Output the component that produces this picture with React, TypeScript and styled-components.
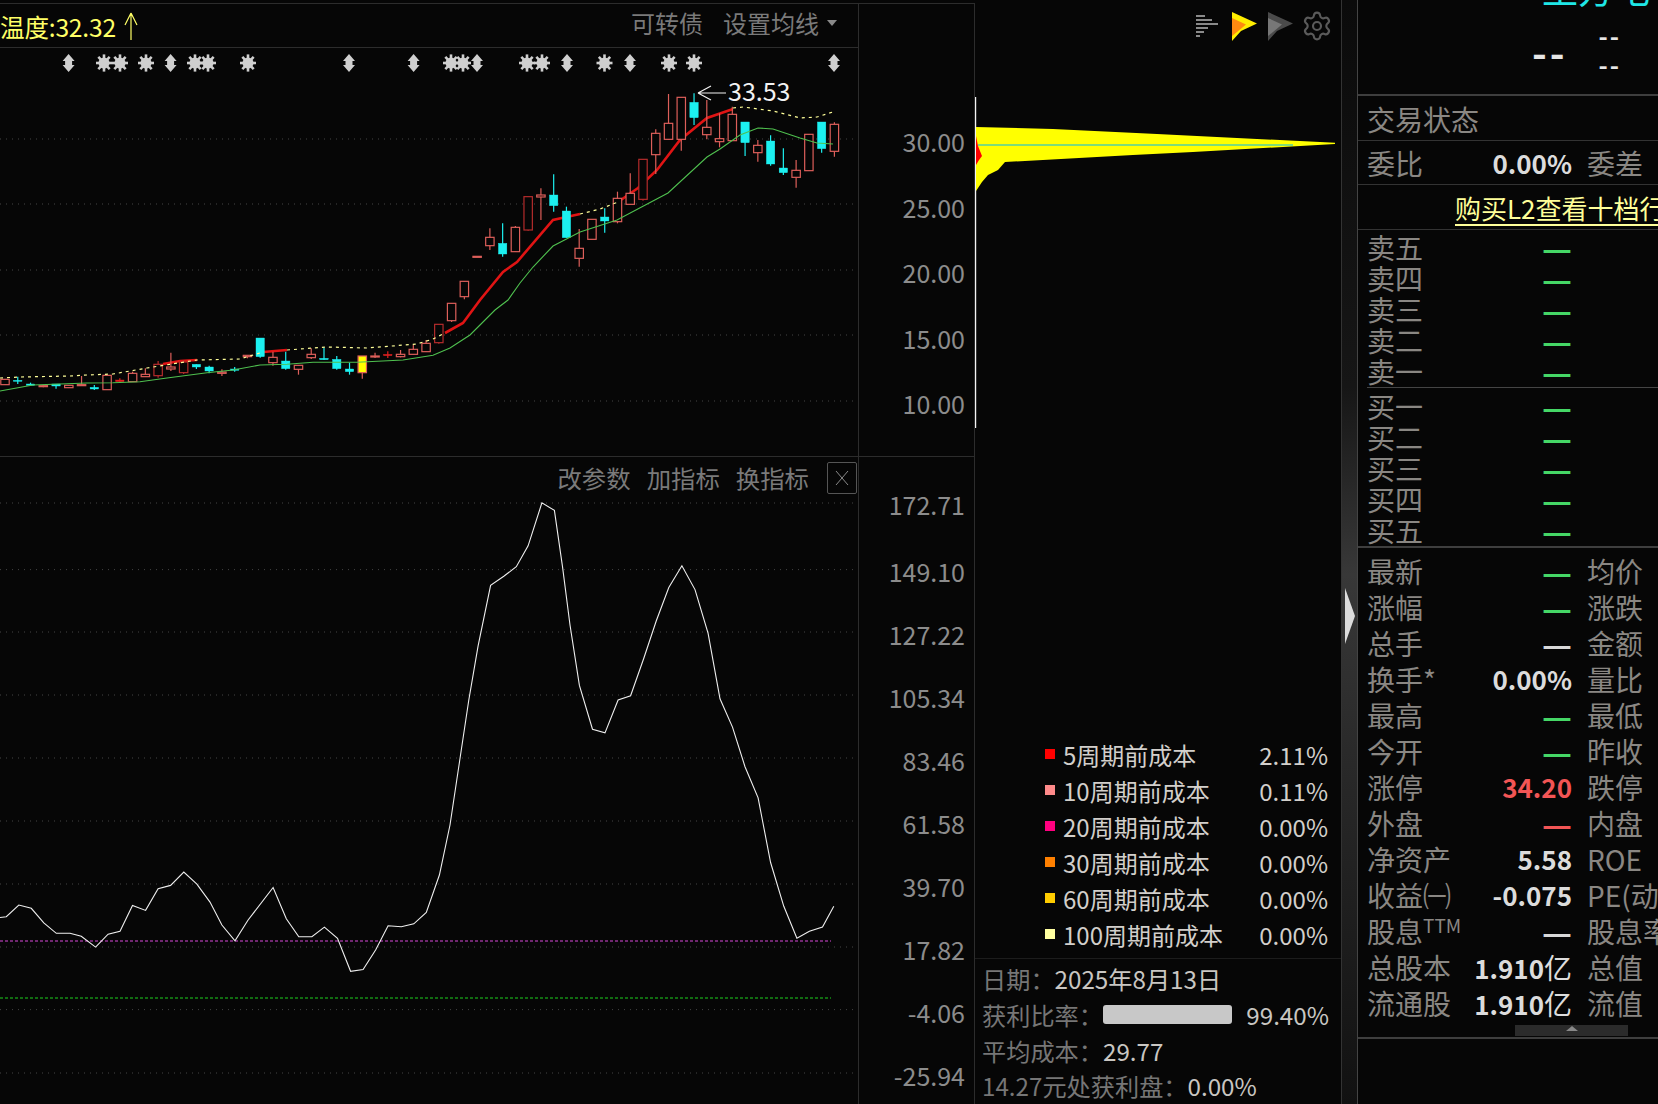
import React from 'react';
import styled, { createGlobalStyle } from 'styled-components';
import { Settings } from 'lucide-react';

const FONT = '"Noto Sans CJK SC", "Noto Sans", sans-serif';
const BG = '#060606';
const LINE = '#2c2c2c';

const GlobalStyle = createGlobalStyle`
  html, body {
    margin: 0;
    background: ${BG};
    font-family: ${FONT};
    overflow: hidden;
  }
  * { box-sizing: border-box; }
`;

const Page = styled.div`
  display: flex;
  width: 1658px;
  height: 1104px;
  overflow: hidden;
  background: ${BG};
`;

const ChartsColumn = styled.div`
  width: 975px;
  flex: none;
  display: flex;
  flex-direction: column;
  padding-top: 3px;
`;

const Pane = styled.div<{ $height: number; $top?: boolean }>`
  display: flex;
  height: ${p => p.$height}px;
  border-top: 1px solid ${LINE};
  ${p => (p.$top ? '' : 'flex: 1;')}
`;

const Plot = styled.div`
  width: 859px;
  flex: none;
  border-right: 1px solid ${LINE};
  position: relative;
  display: flex;
  flex-direction: column;
`;

const Axis = styled.div<{ $pad: number; $row: number }>`
  width: 116px;
  flex: none;
  padding: ${p => p.$pad}px 9px 0 0;
  border-right: 1px solid ${LINE};
  text-align: right;
  font-size: 25px;
  line-height: ${p => p.$row}px;
  color: #8c8c8c;
`;

const IndicatorAxis = styled(Axis)`
  & > div:first-child {
    margin-bottom: 4px;
  }
`;

const ChartHeader = styled.div`
  height: 44px;
  flex: none;
  display: flex;
  align-items: center;
  border-bottom: 1px solid ${LINE};
  color: #7a7a7a;
  font-size: 24px;
`;

const Temperature = styled.span`
  color: #ffff66;
  font-size: 24.6px;
  letter-spacing: -0.2px;
`;

const UpArrow = styled.svg`
  width: 16px;
  height: 28px;
  margin-left: 7px;
  margin-right: auto;
`;

const HeaderLink = styled.span`
  margin: -6px 20px 0 0;
`;

const Caret = styled.span`
  width: 0;
  height: 0;
  margin: -5px 21px 0 -12px;
  border-left: 5px solid transparent;
  border-right: 5px solid transparent;
  border-top: 6px solid #8a8a8a;
`;

const PeakLabel = styled.div`
  position: absolute;
  left: 728px;
  top: 68px;
  color: #f2f2f2;
  font-size: 25px;
  line-height: 36px;
`;

const PlotSvg = styled.svg`
  display: block;
  flex: none;
`;

const IndicatorBar = styled.div`
  height: 45px;
  flex: none;
  display: flex;
  justify-content: flex-end;
  align-items: center;
  padding: 0 1px 4px 0;
  color: #7a7a7a;
  font-size: 24.4px;
`;

const IndicatorLink = styled.span`
  margin-right: 16px;
`;

const CloseBox = styled.div`
  width: 30px;
  height: 32px;
  margin-left: 2px;
  display: flex;
  align-items: center;
  justify-content: center;
  border: 1px solid #555;
  border-radius: 2px;
`;

const ChipPanel = styled.div`
  width: 367px;
  flex: none;
  display: flex;
  flex-direction: column;
  border-right: 1px solid #333;
`;

const ChipTools = styled.div`
  height: 48px;
  flex: none;
  display: flex;
  align-items: center;
  justify-content: flex-end;
  padding: 3px 8px 0 0;
  gap: 10px;
`;

const DartSvg = styled.svg`
  margin: 3px -2px 0 2px;
`;

const Legend = styled.div`
  margin-top: auto;
  padding: 0 13px 6px 0;
  border-bottom: 1px solid #1c1c1c;
`;

const LegendRow = styled.div`
  height: 36px;
  display: flex;
  align-items: center;
  padding-left: 70px;
  font-size: 24px;
  color: #d2cfcb;
`;

const Swatch = styled.i<{ $color: string }>`
  width: 10px;
  height: 10px;
  margin-right: 8px;
  margin-top: -1px;
  background: ${p => p.$color};
`;

const LegendValue = styled.span`
  margin-left: auto;
`;

const ChipInfo = styled.div`
  height: 145px;
  flex: none;
  padding: 2px 12px 0 7px;
  font-size: 24.2px;
  color: #c9c6c2;
`;

const InfoRow = styled.div`
  height: 35.7px;
  display: flex;
  align-items: center;
  white-space: nowrap;
`;

const InfoLabel = styled.span`
  color: #767676;
`;

const ProfitBar = styled.div`
  width: 131px;
  height: 19px;
  margin: 0 14px 0 0;
  background: #c8c8c8;
  border-radius: 3px;
`;

const Gutter = styled.div`
  width: 15px;
  flex: none;
  padding: 588px 0 0 3px;
  background: linear-gradient(180deg, #0b0b0b 0%, #161616 35%, #383838 52%, #2a2a2a 68%, #111 100%);
`;

const Handle = styled.div`
  width: 0;
  height: 0;
  border-top: 28px solid transparent;
  border-bottom: 28px solid transparent;
  border-left: 10px solid #dcdcdc;
`;

const QuotePanel = styled.div`
  flex: 1;
  min-width: 0;
  overflow: hidden;
  border-left: 1px solid #444;
  color: #8a8783;
  font-size: 28px;
`;

const QuoteHead = styled.div`
  height: 96px;
  overflow: hidden;
  border-bottom: 2px solid #3e3e3e;
`;

const StockName = styled.div`
  margin: -31px 0 0 184px;
  height: 38px;
  font-size: 36px;
  line-height: 38px;
  color: #1fe6e6;
  white-space: nowrap;
`;

const HeadNumbers = styled.div`
  display: flex;
  align-items: center;
  margin-top: 16px;
  padding-left: 174px;
  color: #e6e6e6;
  font-weight: 700;
`;

const BigDash = styled.span`
  font-size: 40px;
  line-height: 44px;
  letter-spacing: 3px;
`;

const SmallDashes = styled.div`
  margin-left: 31px;
  margin-top: -2px;
  display: flex;
  flex-direction: column;
  font-size: 25px;
  line-height: 29px;
  letter-spacing: 2px;
`;

const StatusRow = styled.div`
  height: 45px;
  display: flex;
  align-items: center;
  padding: 2px 0 0 9px;
  border-bottom: 1px solid #333;
`;

const RatioRow = styled.div`
  height: 44px;
  display: grid;
  grid-template-columns: 85px 105px 200px;
  column-gap: 15px;
  align-items: center;
  padding-left: 9px;
  border-bottom: 1px solid #333;
  white-space: nowrap;
`;

const PromoRow = styled.div`
  height: 45px;
  padding-left: 97px;
  border-bottom: 1px solid #333;
  white-space: nowrap;
  line-height: 45px;
  font-size: 26px;
`;

const PromoLink = styled.span`
  color: #ffff99;
  border-bottom: 2px solid #ffff99;
  line-height: 32px;
  display: inline-block;
`;

const Book = styled.div<{ $divider?: boolean }>`
  margin-left: 9px;
  padding-top: ${p => (p.$divider ? 2 : 2.5)}px;
  ${p => (p.$divider ? 'border-bottom: 1px solid #444;' : '')}
`;

const BookRow = styled.div`
  height: 31px;
  display: grid;
  grid-template-columns: 100px 105px;
  line-height: 31px;
`;

const Stats = styled.div`
  border-top: 2px solid #3e3e3e;
  border-bottom: 2px solid #3e3e3e;
  height: 493px;
  padding-top: 5px;
`;

const StatRow = styled.div`
  height: 36px;
  display: grid;
  grid-template-columns: 85px 105px 200px;
  column-gap: 15px;
  padding-left: 9px;
  line-height: 36px;
  white-space: nowrap;
`;

const Value = styled.span<{ $color?: string; $bold?: boolean }>`
  text-align: right;
  font-size: 26px;
  font-weight: ${p => (p.$bold ? 700 : 400)};
  color: ${p => p.$color || '#dcdcdc'};
`;

const Dash = styled.span<{ $color: string }>`
  justify-self: end;
  font-size: 33px;
  line-height: inherit;
  font-weight: 700;
  color: ${p => p.$color};
`;

const Thin = styled.span`
  font-weight: 400;
  font-size: 28px;
`;

const Sup = styled.sup`
  font-size: 19px;
  line-height: 0;
`;

const ScrollTab = styled.div`
  width: 113px;
  height: 11px;
  margin: 4px 0 0 157px;
  display: flex;
  justify-content: center;
  background: #2b2b2b;
`;

const TabArrow = styled.div`
  width: 0;
  height: 0;
  margin-top: 1px;
  border-left: 6px solid transparent;
  border-right: 6px solid transparent;
  border-bottom: 5px solid #888;
`;

// candle x positions in page pixels
const candleX = (i: number) => 5 + 12.76 * i;

type Kind = 'u' | 'd' | 'c' | 'y' | 'f';
// body top, body bottom, wick top, wick bottom, kind; values are 3x-crop pixels
type Raw = [number, number, number, number, Kind];

const lowCandles: Raw[] = [
  [238, 254, 238, 254, 'u'], [241, 243, 230, 252, 'c'], [252, 256, 248, 258, 'c'], [257, 260, 254, 262, 'u'],
  [252, 258, 252, 266, 'c'], [256, 263, 256, 263, 'u'], [254, 257, 228, 258, 'u'], [262, 267, 255, 270, 'c'],
  [226, 269, 226, 269, 'u'], [240, 245, 235, 245, 'f'], [220, 245, 215, 245, 'u'], [223, 230, 205, 230, 'u'],
  [193, 227, 183, 233, 'd'], [201, 207, 158, 213, 'u'], [186, 218, 180, 222, 'd'], [193, 201, 193, 207, 'c'],
  [201, 213, 197, 220, 'c'], [216, 220, 208, 228, 'u'], [207, 211, 201, 215, 'c'], [166, 170, 166, 175, 'u'],
  [114, 170, 114, 173, 'c'], [172, 188, 155, 197, 'u'], [183, 206, 155, 209, 'c'], [196, 208, 196, 224, 'u'],
  [163, 173, 145, 177, 'u'], [175, 179, 143, 179, 'c'], [178, 206, 168, 209, 'c'], [207, 215, 188, 224, 'c'],
  [168, 218, 168, 236, 'y'], [168, 171, 158, 174, 'u'], [163, 167, 154, 174, 'f'], [163, 170, 150, 172, 'u'],
  [148, 163, 135, 163, 'u'], [130, 155, 120, 155, 'u'], [73, 128, 73, 131, 'd'], [10, 62, 10, 66, 'u'],
];

const highCandles: Raw[] = [
  [604, 650, 604, 658, 'u'], [529, 531, 529, 531, 'u'], [472, 497, 445, 510, 'u'], [490, 522, 430, 530, 'c'],
  [442, 515, 438, 515, 'u'], [350, 450, 350, 452, 'd'], [345, 351, 325, 420, 'u'], [345, 377, 283, 395, 'c'],
  [393, 473, 380, 473, 'c'], [505, 535, 447, 560, 'u'], [418, 478, 418, 478, 'u'], [411, 423, 385, 458, 'c'],
  [355, 425, 335, 430, 'u'], [340, 373, 280, 373, 'u'], [238, 358, 238, 362, 'd'], [160, 224, 148, 282, 'u'],
  [130, 178, 42, 178, 'u'], [52, 178, 52, 212, 'u'], [67, 113, 40, 135, 'c'], [142, 164, 60, 178, 'u'],
  [176, 185, 100, 202, 'u'], [103, 182, 80, 182, 'u'], [126, 188, 126, 228, 'c'], [196, 218, 180, 245, 'u'],
  [183, 252, 166, 257, 'c'], [264, 278, 205, 285, 'c'], [271, 292, 240, 323, 'u'], [163, 272, 163, 272, 'u'],
  [126, 206, 126, 218, 'c'], [133, 214, 127, 230, 'u'],
];

const candleColor: Record<Kind, string> = { u: '#dd5f5a', d: '#b52c2c', c: '#1cf0f0', y: '#e0605a', f: '#e02020' };

const candles = [
  ...lowCandles.map(c => ({ c, base: 300 })),
  ...highCandles.map(c => ({ c, base: 80 })),
].map(({ c, base }, i) => ({
  x: candleX(i),
  top: base + c[0] / 3,
  bottom: base + c[1] / 3,
  wickTop: base + c[2] / 3,
  wickBottom: base + c[3] / 3,
  kind: c[4],
}));

const maGreen = '0,391 33,385 87,383 113,382.7 140,381.7 167,378 207,372.7 233,370 260,365 287,364.3 313,362.3 357,362.3 403,360 433,355.3 450,348 470,335 480,325 495,310 508,300 520,283 533,267 553,246 580,232 617,220 668,193 707,157 720,149 740,135 758,128 773,129 800,138 817,143 833,144';
const maRedParts = [
  '163,364 180,361 197,360',
  '263,352 287,350',
  '445,333 463,323 480,300 503,272 517,262 553,220 580,214',
  '618,202 638,188 657,170 680,140 707,118 733,109',
];
const maYellowParts = [
  '0,378 20,377 70,376 87,375 113,374 147,368 197,360 240,359 263,352',
  '287,350 327,347 367,348 417,344 433,339 445,333',
  '580,214 600,209 618,202',
  '733,108 743,107 773,111 800,118 817,117 833,112',
];

const gridTop = [139, 204, 270, 335, 401];
const gridBottom = [503, 569.6, 632, 695, 758, 821, 884, 947, 1009.6, 1073];

const kdj = '0,1122 10,1120 30,1092 50,1100 70,1135 90,1160 112,1160 130,1167 153,1193 173,1162 192,1155 212,1093 233,1105 253,1053 273,1045 294,1013 315,1042 336,1085 355,1140 376,1178 397,1128 437,1050 458,1125 478,1168 499,1168 519,1145 540,1172 561,1251 581,1247 601,1200 621,1142 642,1144 662,1137 682,1110 703,1020 720,900 735,750 750,600 765,470 785,325 806,303 826,280 845,230 867,127 887,145 900,280 912,420 927,565 948,670 968,679 989,600 1009,590 1030,500 1050,410 1070,330 1091,278 1112,335 1133,440 1152,597 1172,665 1192,760 1213,835 1233,990 1254,1095 1275,1172 1295,1155 1316,1145 1334,1095'
  .split(' ')
  .map(p => {
    const [x, y] = p.split(',').map(Number);
    return `${(x / 1.6).toFixed(1)},${(450 + y / 2.4).toFixed(1)}`;
  })
  .join(' ');

const arrowMarks = [68.6, 170.6, 349, 413.6, 477, 567, 630, 834];
const starMarks = [104, 120, 146, 195, 208, 248, 451, 463, 527, 542, 604.5, 669, 694];

const StarMark = ({ x }: { x: number }) => (
  <g stroke="#cfcfcf" strokeWidth={2.6}>
    <circle cx={x} cy={63} r={5.5} fill="#cfcfcf" stroke="none" />
    {[0, 45, 90, 135].map(a => {
      const dx = Math.cos((a * Math.PI) / 180) * 8;
      const dy = Math.sin((a * Math.PI) / 180) * 8.6;
      return <line key={a} x1={x - dx} y1={63 - dy} x2={x + dx} y2={63 + dy} />;
    })}
  </g>
);

const ArrowMark = ({ x }: { x: number }) => (
  <polygon
    fill="#cfcfcf"
    points={`${x},54 ${x + 6},61 ${x + 3.5},61 ${x + 3.5},65 ${x + 6},65 ${x},72 ${x - 6},65 ${x - 3.5},65 ${x - 3.5},61 ${x - 6},61`}
  />
);

const CandleChart = () => (
  <PlotSvg width={858} height={408} viewBox="0 48 858 408">
    {gridTop.map(y => (
      <line key={y} x1={0} x2={858} y1={y} y2={y} stroke="#444" strokeDasharray="1 5" />
    ))}
    {arrowMarks.map(x => <ArrowMark key={x} x={x} />)}
    {starMarks.map(x => <StarMark key={x} x={x} />)}
    {maRedParts.map(p => (
      <polyline key={p} points={p} fill="none" stroke="#e01414" strokeWidth={2.6} />
    ))}
    {candles.map(c => {
      const color = candleColor[c.kind];
      const solid = c.kind === 'c' || c.kind === 'f';
      return (
        <g key={c.x}>
          <line x1={c.x} x2={c.x} y1={c.wickTop} y2={c.wickBottom} stroke={color} strokeWidth={1.2} />
          <rect
            x={c.x - 4.2}
            y={c.top}
            width={8.4}
            height={Math.max(c.bottom - c.top, 1)}
            fill={solid ? color : c.kind === 'y' ? '#ffff00' : BG}
            stroke={color}
            strokeWidth={solid ? 0.4 : 1.2}
          />
        </g>
      );
    })}
    <polyline points={maGreen} fill="none" stroke="#4fc04f" strokeWidth={1.1} />
    {maYellowParts.map(p => (
      <polyline key={p} points={p} fill="none" stroke="#ffff99" strokeWidth={1.2} strokeDasharray="3 4" />
    ))}
    <path d="M698 93H726M698 93L711 86M698 93L711 100" fill="none" stroke="#f2f2f2" strokeWidth={1.2} />
  </PlotSvg>
);

const IndicatorChart = () => (
  <PlotSvg width={858} height={602} viewBox="0 502 858 602">
    {gridBottom.map(y => (
      <line key={y} x1={0} x2={858} y1={y} y2={y} stroke="#444" strokeDasharray="1 5" />
    ))}
    <line x1={0} x2={831} y1={941} y2={941} stroke="#d848d8" strokeWidth={1.2} strokeDasharray="3 2" />
    <line x1={0} x2={831} y1={998} y2={998} stroke="#1cd01c" strokeWidth={1.2} strokeDasharray="3 2" />
    <polyline points={kdj} fill="none" stroke="#efefef" strokeWidth={1.1} />
  </PlotSvg>
);

const ChipChart = () => (
  <PlotSvg width={366} height={390} viewBox="975 48 366 390">
    <line x1={975.5} x2={975.5} y1={97} y2={428} stroke="#f4f4f4" strokeWidth={1.4} />
    <polygon
      fill="#ffff00"
      points="976,127 1053,129 1157,134 1257,139 1335,142.7 1335,144 1193,152 1133,155 1005,162 998,170 988,175 982,182 976,191"
    />
    <line x1={978} x2={1293} y1={145} y2={145} stroke="#52d0a0" strokeWidth={1.3} />
    <polygon fill="#ff0000" points="976,136 978,146 982,156 979,160 976,165" />
  </PlotSvg>
);

const BarsIcon = () => (
  <svg width={24} height={26} viewBox="0 0 24 26">
    {[9, 16, 22, 12, 8, 4].map((w, i) => (
      <rect key={i} x={1} y={2 + i * 4} width={w} height={2} fill="#8a8a8a" />
    ))}
  </svg>
);

const DartIcon = ({ outer, inner }: { outer: string; inner: string }) => (
  <DartSvg width={26} height={30} viewBox="0 0 26 30">
    <polygon fill={outer} points="1,0 26,11.5 10,19 1,29" />
    <polygon fill={inner} points="1,6 15,12.5 6,20 1,24" />
  </DartSvg>
);

const legend = [
  ['#ff0000', '5周期前成本', '2.11%'],
  ['#ff8a8a', '10周期前成本', '0.11%'],
  ['#ff0080', '20周期前成本', '0.00%'],
  ['#ff8000', '30周期前成本', '0.00%'],
  ['#ffcc00', '60周期前成本', '0.00%'],
  ['#ffffa0', '100周期前成本', '0.00%'],
];

const GREEN = '#45d766';
const GREY = '#d8d8d8';
const RED = '#f25555';

type Stat = { left: React.ReactNode; value: React.ReactNode; color?: string; dash?: boolean; right: string };

const stats: Stat[] = [
  { left: '最新', value: '—', dash: true, color: GREEN, right: '均价' },
  { left: '涨幅', value: '—', dash: true, color: GREEN, right: '涨跌' },
  { left: '总手', value: '—', dash: true, color: GREY, right: '金额' },
  { left: '换手*', value: '0.00%', right: '量比' },
  { left: '最高', value: '—', dash: true, color: GREEN, right: '最低' },
  { left: '今开', value: '—', dash: true, color: GREEN, right: '昨收' },
  { left: '涨停', value: '34.20', color: RED, right: '跌停' },
  { left: '外盘', value: '—', dash: true, color: RED, right: '内盘' },
  { left: '净资产', value: '5.58', right: 'ROE' },
  { left: '收益㈠', value: '-0.075', right: 'PE(动)' },
  { left: <>股息<Sup>TTM</Sup></>, value: '—', dash: true, color: GREY, right: '股息率' },
  { left: '总股本', value: <>1.910<Thin>亿</Thin></>, right: '总值' },
  { left: '流通股', value: <>1.910<Thin>亿</Thin></>, right: '流值' },
];

const sellRows = ['卖五', '卖四', '卖三', '卖二', '卖一'];
const buyRows = ['买一', '买二', '买三', '买四', '买五'];

const App: React.FC = () => (
  <Page>
    <GlobalStyle />
    <ChartsColumn>
      <Pane $height={453} $top>
        <Plot>
          <ChartHeader>
            <Temperature>温度:32.32</Temperature>
            <UpArrow viewBox="0 0 16 28">
              <path d="M8 28V1M8 1L2 13M8 1L14 13" fill="none" stroke="#ffff66" strokeWidth={1.2} />
            </UpArrow>
            <HeaderLink>可转债</HeaderLink>
            <HeaderLink>设置均线</HeaderLink>
            <Caret />
          </ChartHeader>
          <CandleChart />
          <PeakLabel>33.53</PeakLabel>
        </Plot>
        <Axis $pad={105} $row={65.5}>
          <div>30.00</div>
          <div>25.00</div>
          <div>20.00</div>
          <div>15.00</div>
          <div>10.00</div>
        </Axis>
      </Pane>
      <Pane $height={648}>
        <Plot>
          <IndicatorBar>
            <IndicatorLink>改参数</IndicatorLink>
            <IndicatorLink>加指标</IndicatorLink>
            <IndicatorLink>换指标</IndicatorLink>
            <CloseBox>
              <svg width={14} height={16} viewBox="0 0 14 16">
                <path d="M1 1L13 15M13 1L1 15" stroke="#8a8a8a" strokeWidth={1} />
              </svg>
            </CloseBox>
          </IndicatorBar>
          <IndicatorChart />
        </Plot>
        <IndicatorAxis $pad={16} $row={63}>
          <div>172.71</div>
          <div>149.10</div>
          <div>127.22</div>
          <div>105.34</div>
          <div>83.46</div>
          <div>61.58</div>
          <div>39.70</div>
          <div>17.82</div>
          <div>-4.06</div>
          <div>-25.94</div>
        </IndicatorAxis>
      </Pane>
    </ChartsColumn>

    <ChipPanel>
      <ChipTools>
        <BarsIcon />
        <DartIcon outer="#ffee00" inner="#ff8a10" />
        <DartIcon outer="#4a4a4a" inner="#777" />
        <Settings size={32} color="#5a5a5a" strokeWidth={1.6} />
      </ChipTools>
      <ChipChart />
      <Legend>
        {legend.map(([color, name, value]) => (
          <LegendRow key={name}>
            <Swatch $color={color} />
            {name}
            <LegendValue>{value}</LegendValue>
          </LegendRow>
        ))}
      </Legend>
      <ChipInfo>
        <InfoRow>
          <InfoLabel>日期：</InfoLabel>2025年8月13日
        </InfoRow>
        <InfoRow>
          <InfoLabel>获利比率：</InfoLabel>
          <ProfitBar />
          99.40%
        </InfoRow>
        <InfoRow>
          <InfoLabel>平均成本：</InfoLabel>29.77
        </InfoRow>
        <InfoRow>
          <InfoLabel>14.27元处获利盘：</InfoLabel>0.00%
        </InfoRow>
      </ChipInfo>
    </ChipPanel>

    <Gutter>
      <Handle />
    </Gutter>

    <QuotePanel>
      <QuoteHead>
        <StockName>王方电</StockName>
        <HeadNumbers>
          <BigDash>--</BigDash>
          <SmallDashes>
            <span>--</span>
            <span>--</span>
          </SmallDashes>
        </HeadNumbers>
      </QuoteHead>
      <StatusRow>交易状态</StatusRow>
      <RatioRow>
        <span>委比</span>
        <Value $bold>0.00%</Value>
        <span>委差</span>
      </RatioRow>
      <PromoRow>
        <PromoLink>购买L2查看十档行情</PromoLink>
      </PromoRow>
      <Book $divider>
        {sellRows.map(r => (
          <BookRow key={r}>
            <span>{r}</span>
            <Dash $color={GREEN}>—</Dash>
          </BookRow>
        ))}
      </Book>
      <Book>
        {buyRows.map(r => (
          <BookRow key={r}>
            <span>{r}</span>
            <Dash $color={GREEN}>—</Dash>
          </BookRow>
        ))}
      </Book>
      <Stats>
        {stats.map(s => (
          <StatRow key={s.right}>
            <span>{s.left}</span>
            {s.dash ? (
              <Dash $color={s.color as string}>{s.value}</Dash>
            ) : (
              <Value $color={s.color} $bold>{s.value}</Value>
            )}
            <span>{s.right}</span>
          </StatRow>
        ))}
        <ScrollTab>
          <TabArrow />
        </ScrollTab>
      </Stats>
    </QuotePanel>
  </Page>
);

export default App;
